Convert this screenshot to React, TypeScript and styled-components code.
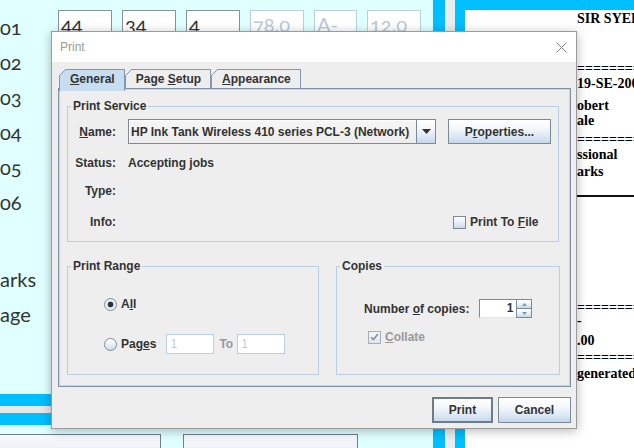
import React from "react";
import styled, { createGlobalStyle } from "styled-components";

const GlobalStyle = createGlobalStyle`
  *, *::before, *::after { box-sizing: border-box; }
  html, body { margin: 0; padding: 0; background: #ffffff; }
  body { font-family: "Liberation Sans", Arial, sans-serif; }
`;

const C = {
  cyan: "#e0ffff",
  sky: "#00bfff",
  face: "#eeeeee",
  text: "#333333",
  border: "#7a8a99",
  light: "#b8cfe5",
  tab: "#c8ddf2",
  tabBorder: "#8497b0",
  disabled: "#999999",
};

const buttonGradient =
  "linear-gradient(180deg, #ffffff 0%, #f5f8fb 35%, #dde9f5 70%, #c4d7eb 100%)";

/* ---------- background application ---------- */

const Screen = styled.div`
  position: relative;
  width: 634px;
  height: 448px;
  overflow: hidden;
  display: flex;
  background: #e8eeee;
`;

const LeftPane = styled.div`
  width: 433px;
  flex: none;
  background: ${C.cyan};
  display: flex;
  flex-direction: column;
`;

const FormArea = styled.div`
  height: 394px;
  flex: none;
  display: flex;
`;

const LabelColumn = styled.div`
  width: 58px;
  flex: none;
  padding-top: 10px;
  display: flex;
  flex-direction: column;
  font-family: Lato, "Open Sans", sans-serif;
  font-size: 20px;
  color: ${C.text};
  font-variant-numeric: oldstyle-nums;
  font-feature-settings: "onum";
`;

const SideLabel = styled.div<{ $mt?: number }>`
  height: 35px;
  line-height: 35px;
  white-space: nowrap;
  margin-top: ${(p) => p.$mt ?? 0}px;
`;

const FieldRow = styled.div`
  display: grid;
  grid-template-columns: 54px 54px 54px 54px 43px 54px;
  column-gap: 10px;
  align-content: start;
  padding-top: 10px;
`;

const ValueBox = styled.div<{ $disabled?: boolean }>`
  height: 34px;
  background: #ffffff;
  border: 1px solid ${(p) => (p.$disabled ? C.light : "#8593a1")};
  color: ${(p) => (p.$disabled ? "#b8c9da" : C.text)};
  font-family: Lato, "Open Sans", sans-serif;
  font-size: 20px;
  line-height: 24px;
  padding: 1px 2px;
  font-variant-numeric: oldstyle-nums;
  font-feature-settings: "onum";
  white-space: nowrap;
  overflow: hidden;
`;

const StripeGroup = styled.div`
  flex: none;
  display: flex;
  flex-direction: column;
  gap: 7px;
  background: #e8e8e8;
`;

const Stripe = styled.div`
  height: 12px;
  background: ${C.sky};
`;

const BottomBar = styled.div`
  margin-top: 9px;
  display: flex;
  gap: 22px;
`;

const BottomButton = styled.div<{ $w: number; $first?: boolean }>`
  width: ${(p) => p.$w}px;
  height: 30px;
  margin-left: ${(p) => (p.$first ? -1 : 0)}px;
  border: 1px solid #6f7f8f;
  background: linear-gradient(180deg, #f7f9fb 0%, #e4ecf4 100%);
`;

const Rail = styled.div`
  width: 12px;
  flex: none;
  background: ${C.sky};
`;

const ReportFrame = styled.div`
  flex: 1;
  margin-left: 10px;
  border-left: 10px solid ${C.sky};
  border-top: 10px solid ${C.sky};
  background: #ffffff;
  overflow: hidden;
  padding-left: 112px;
  display: flex;
  flex-direction: column;
  font-family: "Liberation Serif", "Times New Roman", serif;
  font-weight: bold;
  font-size: 14px;
  color: #000000;
`;

const ReportLine = styled.div<{ $mt: number }>`
  margin-top: ${(p) => p.$mt}px;
  height: 14px;
  line-height: 14px;
  white-space: nowrap;
`;

const EqLine = styled.div<{ $mt: number }>`
  margin-top: ${(p) => p.$mt}px;
  height: 14px;
  line-height: 20px;
  overflow: hidden;
  white-space: nowrap;
`;

const ReportRule = styled.div<{ $mt: number }>`
  margin-top: ${(p) => p.$mt}px;
  height: 2px;
  background: #111111;
`;

/* ---------- print dialog ---------- */

const Dialog = styled.div`
  position: absolute;
  left: 51px;
  top: 31px;
  width: 526px;
  height: 398px;
  border: 1px solid #9b9b9b;
  background: ${C.face};
  box-shadow: 0 2px 10px rgba(0, 0, 0, 0.28);
  display: flex;
  flex-direction: column;
  font-family: "Liberation Sans", Arial, sans-serif;
  font-size: 12px;
  font-weight: bold;
  color: ${C.text};
`;

const TitleBar = styled.div`
  height: 30px;
  flex: none;
  background: #ffffff;
  display: flex;
  align-items: center;
  justify-content: space-between;
  padding: 0 9px 0 8px;
`;

const TitleText = styled.span`
  font-weight: normal;
  font-size: 12px;
  color: #999999;
`;

const CloseIcon = styled.svg`
  width: 11px;
  height: 11px;
  stroke: #7f7f7f;
  stroke-width: 1;
  fill: none;
`;

const Body = styled.div`
  flex: 1;
  display: flex;
  flex-direction: column;
  padding: 7px 5px 4px 6px;
`;

const TabStrip = styled.div`
  height: 19px;
  flex: none;
  display: flex;
  align-items: flex-end;
  padding-left: 1px;
  position: relative;
  z-index: 1;
`;

const Tab = styled.div<{ $active?: boolean }>`
  position: relative;
  height: ${(p) => (p.$active ? 22 : 19)}px;
  margin-bottom: ${(p) => (p.$active ? -3 : 0)}px;
  padding: 0 9px ${(p) => (p.$active ? 3 : 0)}px 10px;
  display: flex;
  align-items: center;
  border: 1px solid ${C.tabBorder};
  border-bottom: none;
  background: ${(p) => (p.$active ? C.tab : C.face)};
  white-space: nowrap;
  &::before {
    content: "";
    position: absolute;
    left: -1px;
    top: -1px;
    width: 7px;
    height: 7px;
    background: linear-gradient(
      135deg,
      ${C.face} 0 calc(50% - 0.6px),
      ${C.tabBorder} calc(50% - 0.6px) calc(50% + 0.6px),
      transparent calc(50% + 0.6px)
    );
  }
`;

const TabPanel = styled.div`
  height: 299px;
  flex: none;
  border: 1px solid #7d91aa;
  box-shadow: inset 0 0 0 1px #c3d6ea;
  padding: 10px 11px 11px 8px;
  display: flex;
  flex-direction: column;
  gap: 17px;
`;

const Group = styled.fieldset<{ $w?: number }>`
  margin: 0;
  min-width: 0;
  border: 1px solid ${C.light};
  padding: ${(p) => (p.$w ? "0" : "6px 0 9px 0")};
  ${(p) => (p.$w ? `width: ${p.$w}px; flex: none;` : "flex: 1;")}
  display: flex;
  flex-direction: column;
`;

const GroupTitle = styled.legend`
  padding: 0 2px;
  margin-left: 3px;
  font-size: 12px;
  line-height: 14px;
  font-weight: bold;
  color: ${C.text};
`;

const FormRow = styled.div<{ $mt?: number; $h: number }>`
  display: grid;
  grid-template-columns: 48px 308px 103px;
  column-gap: 12px;
  align-items: center;
  height: ${(p) => p.$h}px;
  margin-top: ${(p) => p.$mt ?? 0}px;
`;

const FormLabel = styled.span`
  text-align: right;
  white-space: nowrap;
`;

const FormValue = styled.span`
  white-space: nowrap;
`;

const Mn = styled.span`
  text-decoration: underline;
  text-underline-offset: 1px;
`;

const Combo = styled.div`
  height: 25px;
  display: flex;
  border: 1px solid ${C.border};
  background: ${C.face};
`;

const ComboValue = styled.div`
  flex: 1;
  min-width: 0;
  display: flex;
  align-items: center;
  padding-left: 2px;
  white-space: nowrap;
  overflow: hidden;
  background: linear-gradient(180deg, #f6f6f6 0%, #ececec 100%);
  box-shadow: inset 1px 1px 0 #ffffff;
`;

const ComboArrow = styled.div`
  width: 19px;
  flex: none;
  border-left: 1px solid ${C.border};
  background: ${buttonGradient};
  display: flex;
  align-items: center;
  justify-content: center;
`;

const PushButton = styled.div<{ $default?: boolean; $w?: number }>`
  height: ${(p) => (p.$w ? 26 : 25)}px;
  ${(p) => (p.$w ? `width: ${p.$w}px;` : "")}
  display: flex;
  align-items: center;
  justify-content: center;
  border: 1px solid ${(p) => (p.$default ? "#6d7b8a" : C.border)};
  box-shadow: ${(p) => (p.$default ? "inset 0 0 0 1px #6d7b8a" : "none")};
  background: ${buttonGradient};
  white-space: nowrap;
`;

const CheckRow = styled.div<{ $indent?: number; $disabled?: boolean }>`
  display: flex;
  align-items: center;
  gap: 4px;
  height: 16px;
  margin-left: ${(p) => p.$indent ?? 0}px;
  color: ${(p) => (p.$disabled ? C.disabled : C.text)};
  white-space: nowrap;
`;

const CheckBox = styled.span<{ $disabled?: boolean }>`
  width: 13px;
  height: 13px;
  flex: none;
  display: flex;
  align-items: center;
  justify-content: center;
  border: 1px solid ${(p) => (p.$disabled ? "#9fb0c2" : C.border)};
  background: ${(p) =>
    p.$disabled
      ? "linear-gradient(180deg, #f4f6f8, #dfe6ee)"
      : "linear-gradient(180deg, #ffffff 0%, #eef3f8 40%, #c8daec 100%)"};
`;

const GroupsRow = styled.div`
  display: flex;
  gap: 17px;
`;

const RangeBody = styled.div`
  padding: 23px 0 20px 36px;
  display: flex;
  flex-direction: column;
  gap: 22px;
`;

const RadioRow = styled.div<{ $h: number }>`
  height: ${(p) => p.$h}px;
  display: flex;
  align-items: center;
  white-space: nowrap;
`;

const Radio = styled.span<{ $checked?: boolean }>`
  width: 13px;
  height: 13px;
  flex: none;
  margin-right: 4px;
  border-radius: 50%;
  border: 1px solid #7f8d9b;
  background: ${(p) =>
    p.$checked
      ? "radial-gradient(circle, #333333 0 2.6px, #e8eef5 3.2px)"
      : "linear-gradient(180deg, #ffffff 0%, #edf2f8 45%, #c8daec 100%)"};
`;

const SmallField = styled.div<{ $ml: number }>`
  width: 48px;
  height: 20px;
  margin-left: ${(p) => p.$ml}px;
  border: 1px solid ${C.light};
  background: #ffffff;
  color: ${C.light};
  font-weight: normal;
  padding-left: 3px;
  line-height: 18px;
`;

const DimLabel = styled.span<{ $ml: number }>`
  margin-left: ${(p) => p.$ml}px;
  color: ${C.disabled};
`;

const CopiesBody = styled.div`
  padding: 26px 0 0 27px;
  display: flex;
  flex-direction: column;
  gap: 11px;
`;

const SpinnerRow = styled.div`
  height: 19px;
  display: flex;
  align-items: center;
  white-space: nowrap;
`;

const Spinner = styled.div`
  margin-left: 10px;
  width: 53px;
  height: 19px;
  display: flex;
`;

const SpinnerField = styled.div`
  flex: 1;
  border: 1px solid ${C.border};
  border-bottom-color: #dfe5eb;
  border-right: none;
  background: #ffffff;
  text-align: right;
  padding-right: 3px;
  line-height: 17px;
`;

const SpinnerButtons = styled.div`
  width: 16px;
  flex: none;
  display: flex;
  flex-direction: column;
  border: 1px solid ${C.border};
`;

const SpinnerButton = styled.div<{ $top?: boolean }>`
  flex: 1;
  display: flex;
  align-items: center;
  justify-content: center;
  background: ${buttonGradient};
  border-bottom: ${(p) => (p.$top ? `1px solid ${C.border}` : "none")};
`;

const ButtonBar = styled.div`
  margin-top: 10px;
  display: flex;
  justify-content: flex-end;
  gap: 5px;
`;

const repeatEq = "=".repeat(20);

export default function App() {
  return (
    <>
      <GlobalStyle />
      <Screen>
        <LeftPane>
          <FormArea>
            <LabelColumn>
              <SideLabel>01</SideLabel>
              <SideLabel>02</SideLabel>
              <SideLabel>03</SideLabel>
              <SideLabel>04</SideLabel>
              <SideLabel>05</SideLabel>
              <SideLabel>06</SideLabel>
              <SideLabel $mt={42}>arks</SideLabel>
              <SideLabel>age</SideLabel>
            </LabelColumn>
            <FieldRow>
              <ValueBox>44</ValueBox>
              <ValueBox>34</ValueBox>
              <ValueBox>4</ValueBox>
              <ValueBox $disabled>78.0</ValueBox>
              <ValueBox $disabled>A-</ValueBox>
              <ValueBox $disabled>12.0</ValueBox>
            </FieldRow>
          </FormArea>
          <StripeGroup>
            <Stripe />
            <Stripe />
          </StripeGroup>
          <BottomBar>
            <BottomButton $w={162} $first />
            <BottomButton $w={175} />
          </BottomBar>
        </LeftPane>
        <Rail />
        <ReportFrame>
          <ReportLine $mt={2}>SIR SYED UNIVERSITY</ReportLine>
          <EqLine $mt={33}>{repeatEq}</EqLine>
          <ReportLine $mt={4}>19-SE-200</ReportLine>
          <ReportLine $mt={8}>obert</ReportLine>
          <ReportLine $mt={1}>ale</ReportLine>
          <EqLine $mt={2}>{repeatEq}</EqLine>
          <ReportLine $mt={4}>ssional</ReportLine>
          <ReportLine $mt={3}>arks</ReportLine>
          <ReportRule $mt={16} />
          <EqLine $mt={101}>{repeatEq}</EqLine>
          <ReportLine $mt={2}>-</ReportLine>
          <ReportLine $mt={6}>.00</ReportLine>
          <EqLine $mt={0}>{repeatEq}</EqLine>
          <ReportLine $mt={5}>generated</ReportLine>
        </ReportFrame>

        <Dialog>
          <TitleBar>
            <TitleText>Print</TitleText>
            <CloseIcon viewBox="0 0 11 11">
              <path d="M0.5 0.5 L10.5 10.5 M10.5 0.5 L0.5 10.5" />
            </CloseIcon>
          </TitleBar>
          <Body>
            <TabStrip>
              <Tab $active>
                <Mn>G</Mn>eneral
              </Tab>
              <Tab>
                Page&nbsp;<Mn>S</Mn>etup
              </Tab>
              <Tab>
                <Mn>A</Mn>ppearance
              </Tab>
            </TabStrip>
            <TabPanel>
              <Group>
                <GroupTitle>Print Service</GroupTitle>
                <FormRow $h={25}>
                  <FormLabel>
                    <Mn>N</Mn>ame:
                  </FormLabel>
                  <Combo>
                    <ComboValue>HP Ink Tank Wireless 410 series PCL-3 (Network)</ComboValue>
                    <ComboArrow>
                      <svg width="9" height="5" viewBox="0 0 9 5">
                        <path d="M0 0 H9 L4.5 5 Z" fill="#333333" />
                      </svg>
                    </ComboArrow>
                  </Combo>
                  <PushButton>
                    P<Mn>r</Mn>operties...
                  </PushButton>
                </FormRow>
                <FormRow $h={20} $mt={9}>
                  <FormLabel>Status:</FormLabel>
                  <FormValue>Accepting jobs</FormValue>
                  <span />
                </FormRow>
                <FormRow $h={20} $mt={8}>
                  <FormLabel>Type:</FormLabel>
                  <FormValue />
                  <span />
                </FormRow>
                <FormRow $h={20} $mt={11}>
                  <FormLabel>Info:</FormLabel>
                  <FormValue />
                  <CheckRow $indent={5}>
                    <CheckBox />
                    <span>
                      Print To <Mn>F</Mn>ile
                    </span>
                  </CheckRow>
                </FormRow>
              </Group>
              <GroupsRow>
                <Group $w={252}>
                  <GroupTitle>Print Range</GroupTitle>
                  <RangeBody>
                    <RadioRow $h={16}>
                      <Radio $checked />
                      <span>
                        A<Mn>l</Mn>l
                      </span>
                    </RadioRow>
                    <RadioRow $h={20}>
                      <Radio />
                      <span>
                        Pag<Mn>e</Mn>s
                      </span>
                      <SmallField $ml={10}>1</SmallField>
                      <DimLabel $ml={5}>To</DimLabel>
                      <SmallField $ml={4}>1</SmallField>
                    </RadioRow>
                  </RangeBody>
                </Group>
                <Group $w={224}>
                  <GroupTitle>Copies</GroupTitle>
                  <CopiesBody>
                    <SpinnerRow>
                      <span>
                        Number <Mn>o</Mn>f copies:
                      </span>
                      <Spinner>
                        <SpinnerField>1</SpinnerField>
                        <SpinnerButtons>
                          <SpinnerButton $top>
                            <svg width="5" height="3" viewBox="0 0 5 3">
                              <path d="M0 3 L2.5 0 L5 3 Z" fill="#8a96a3" />
                            </svg>
                          </SpinnerButton>
                          <SpinnerButton>
                            <svg width="5" height="3" viewBox="0 0 5 3">
                              <path d="M0 0 L5 0 L2.5 3 Z" fill="#8a96a3" />
                            </svg>
                          </SpinnerButton>
                        </SpinnerButtons>
                      </Spinner>
                    </SpinnerRow>
                    <CheckRow $indent={4} $disabled>
                      <CheckBox $disabled>
                        <svg width="9" height="8" viewBox="0 0 9 8">
                          <path d="M1 4.2 L3.4 6.6 L8 1" stroke="#8f8f8f" strokeWidth="1.6" fill="none" />
                        </svg>
                      </CheckBox>
                      <span>
                        <Mn>C</Mn>ollate
                      </span>
                    </CheckRow>
                  </CopiesBody>
                </Group>
              </GroupsRow>
            </TabPanel>
            <ButtonBar>
              <PushButton $default $w={61}>
                Print
              </PushButton>
              <PushButton $w={73}>Cancel</PushButton>
            </ButtonBar>
          </Body>
        </Dialog>
      </Screen>
    </>
  );
}
